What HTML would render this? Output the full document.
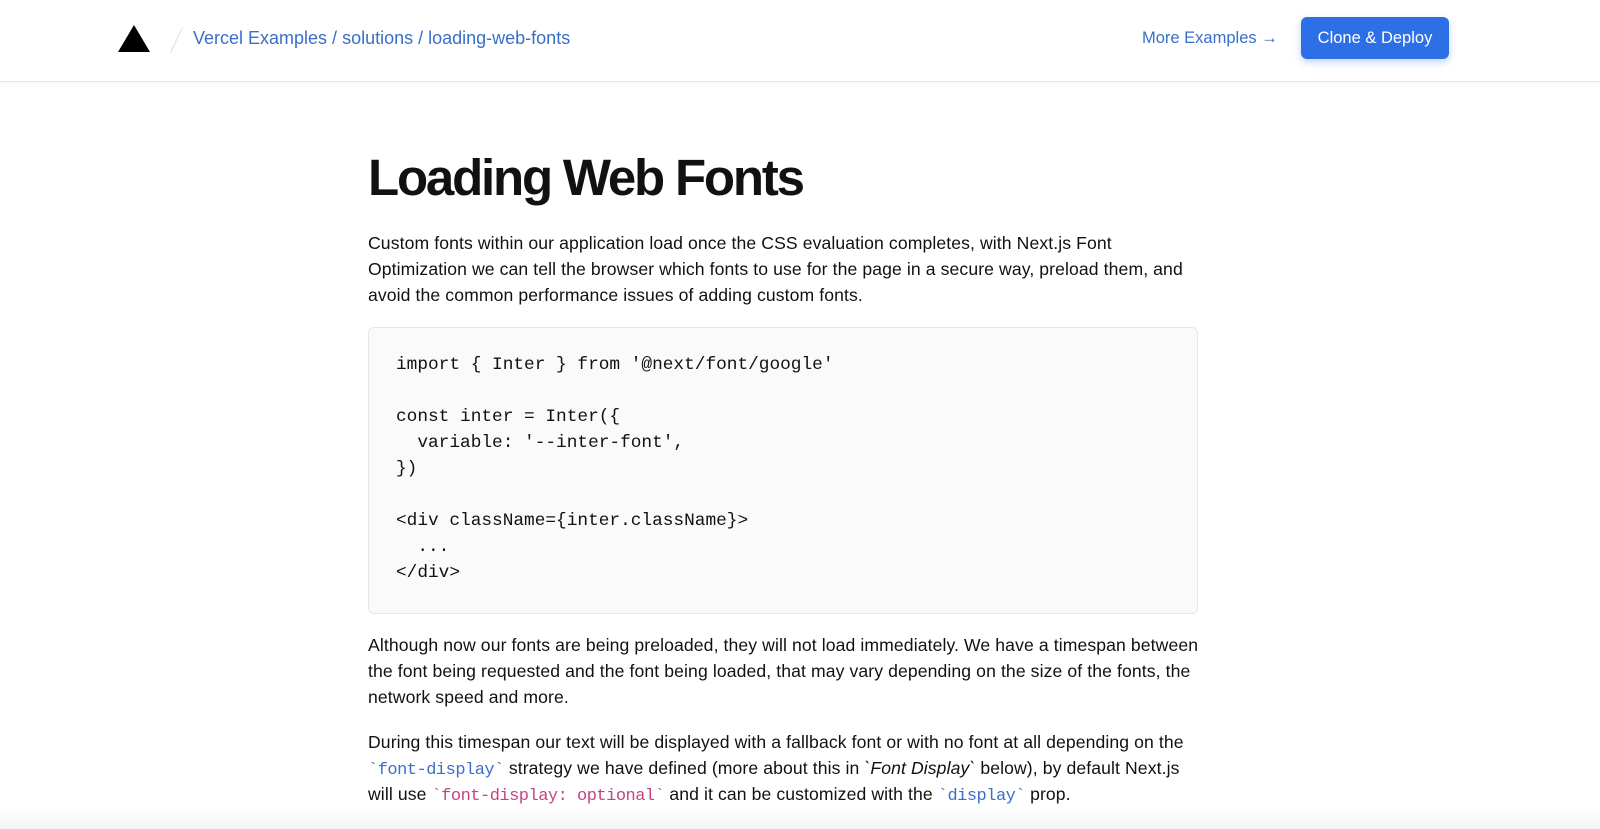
<!DOCTYPE html>
<html><head><meta charset="utf-8"><style>
*{margin:0;padding:0;box-sizing:border-box}
body{width:1600px;height:829px;overflow:hidden;background:#fff;font-family:"Liberation Sans",sans-serif;color:#111;position:relative}
header{height:82px;border-bottom:1px solid #e8e8e8;position:relative;box-shadow:0 1px 3px rgba(0,0,0,.03)}
.tri{position:absolute;left:118px;top:25px;width:0;height:0;border-left:16px solid transparent;border-right:16px solid transparent;border-bottom:27px solid #000}
.slash{position:absolute;left:176px;top:26px;width:1px;height:28px;background:#ddd;transform:rotate(25deg)}
.crumb{position:absolute;left:193px;top:28px;font-size:18px;color:#3a6fc9}
.more{position:absolute;left:1142px;top:29px;font-size:16.5px;color:#3a6fc9}
.btn{position:absolute;left:1301px;top:17px;width:148px;height:42px;background:#2d6fe6;border-radius:6px;color:#fff;font-size:16.5px;line-height:42px;text-align:center;box-shadow:0 3px 8px rgba(45,111,230,.3)}
main{position:absolute;left:368px;top:145px;width:830px}
h1{font-size:51px;font-weight:bold;letter-spacing:-2.2px;line-height:66px;margin-bottom:19px}
p{font-size:17.6px;line-height:26px;margin-bottom:19px;letter-spacing:0.1px;white-space:nowrap}
pre{background:#fafafa;border:1px solid #e6e6e6;border-radius:6px;padding:24px 27px;height:287px;font-family:"Liberation Mono",monospace;font-size:17.8px;line-height:26px;color:#111;margin-bottom:18px}
code{font-family:"Liberation Mono",monospace;font-size:17px;line-height:1;color:#3a6fc9;letter-spacing:-0.5px}
code.p{color:#c4457e}
.fade{position:absolute;left:0;right:0;bottom:0;height:22px;background:linear-gradient(rgba(255,255,255,0),rgba(235,235,235,.6))}
</style></head><body>
<header><div class="tri"></div><div class="slash"></div><div class="crumb">Vercel Examples / solutions / loading-web-fonts</div><div class="more">More Examples →</div><div class="btn">Clone &amp; Deploy</div></header>
<main>
<h1>Loading Web Fonts</h1>
<p>Custom fonts within our application load once the CSS evaluation completes, with Next.js Font<br>Optimization we can tell the browser which fonts to use for the page in a secure way, preload them, and<br>avoid the common performance issues of adding custom fonts.</p>
<pre>import { Inter } from '@next/font/google'

const inter = Inter({
  variable: '--inter-font',
})

&lt;div className={inter.className}&gt;
  ...
&lt;/div&gt;</pre>
<p>Although now our fonts are being preloaded, they will not load immediately. We have a timespan between<br>the font being requested and the font being loaded, that may vary depending on the size of the fonts, the<br>network speed and more.</p>
<p>During this timespan our text will be displayed with a fallback font or with no font at all depending on the<br><code>`font-display`</code> strategy we have defined (more about this in <i>`Font Display`</i> below), by default Next.js<br>will use <code class="p">`font-display: optional`</code> and it can be customized with the <code>`display`</code> prop.</p>
</main>
<div class="fade"></div>
</body></html>
